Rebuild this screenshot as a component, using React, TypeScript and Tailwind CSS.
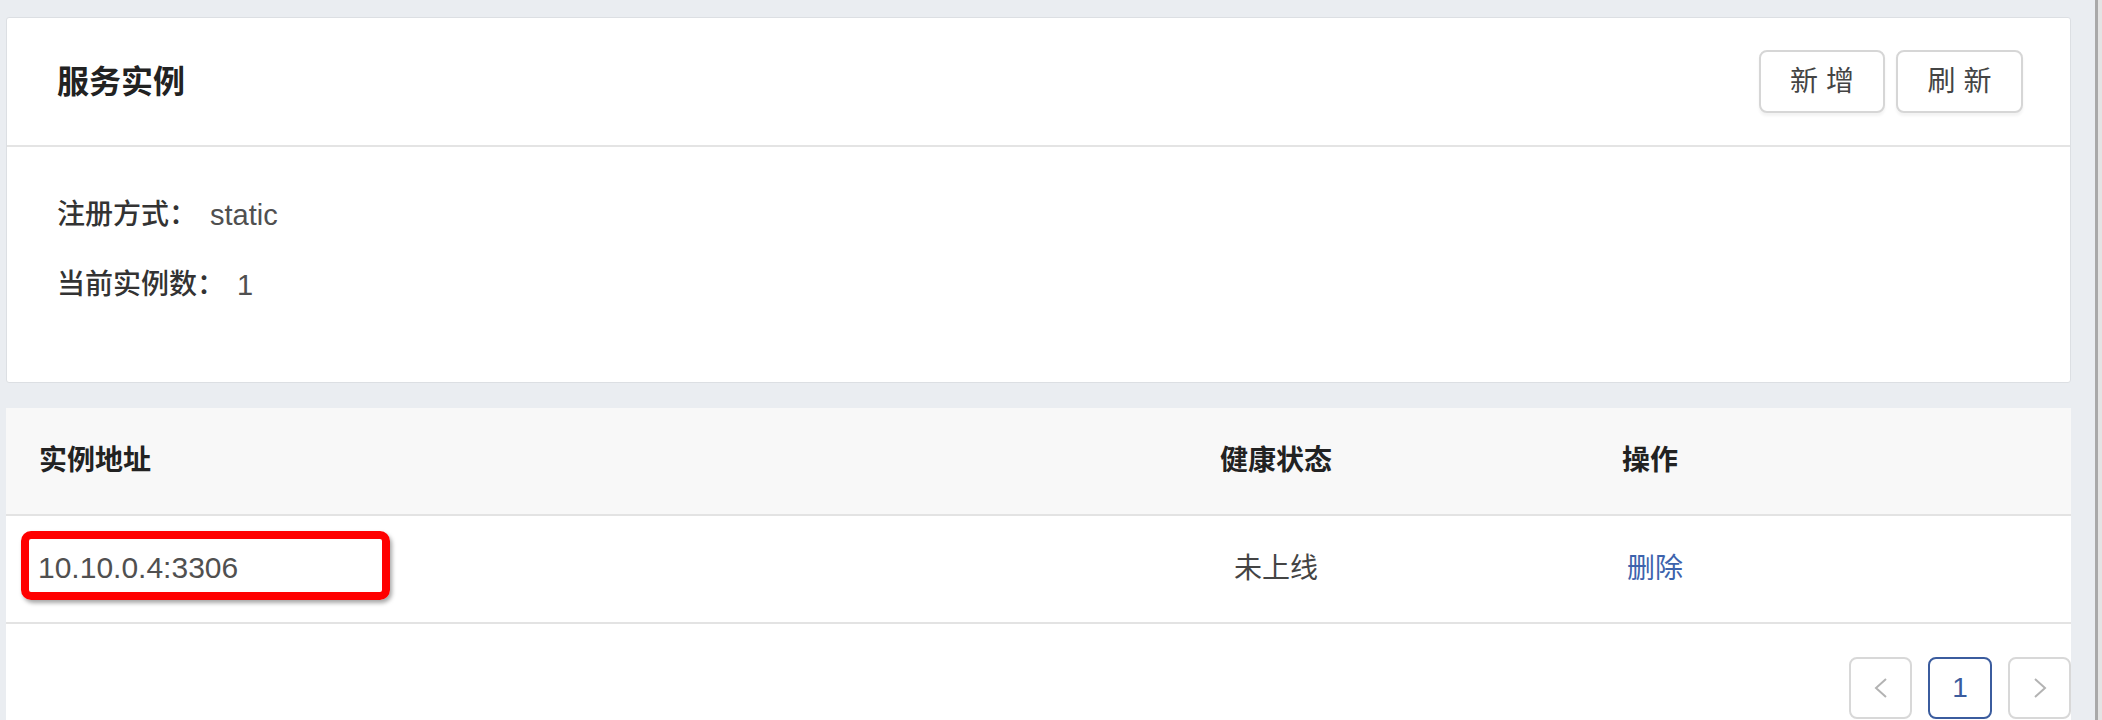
import React from "react";

const FONT = '"Liberation Sans", "Noto Sans CJK SC", sans-serif';

function Chevron({ dir }: { dir: "left" | "right" }) {
  return (
    <svg width="14" height="20" viewBox="0 0 14 20" fill="none">
      {dir === "left" ? (
        <path d="M12 1 L2 10 L12 19" stroke="#b3b3b3" strokeWidth="2" strokeLinejoin="miter" />
      ) : (
        <path d="M2 1 L12 10 L2 19" stroke="#b3b3b3" strokeWidth="2" strokeLinejoin="miter" />
      )}
    </svg>
  );
}

export default function App() {
  return (
    <div
      className="flex w-[2102px] h-[720px] overflow-hidden bg-[#eaedf1]"
      style={{ fontFamily: FONT }}
    >
      <div className="flex-1 flex flex-col pl-[6px] pr-[24px] pt-[17px] gap-[25px] min-w-0">
        {/* Card 1 */}
        <div className="bg-white border border-[#dcdfe3] rounded-[3px] h-[366px] flex flex-col shrink-0">
          <div className="h-[129px] flex items-center justify-between pl-[50px] pr-[47px] border-b-2 border-[#e4e4e4]">
            <div className="text-[32px] leading-[40px] font-semibold text-[#222222]">服务实例</div>
            <div className="flex gap-[11px]">
              <button className="w-[126px] h-[63px] border-2 border-[#d6d6d6] rounded-[8px] bg-white text-[28px] text-[#444444] shadow-[0_3px_3px_rgba(0,0,0,0.05)] flex items-center justify-center">
                新 增
              </button>
              <button className="w-[127px] h-[63px] border-2 border-[#d6d6d6] rounded-[8px] bg-white text-[28px] text-[#444444] shadow-[0_3px_3px_rgba(0,0,0,0.05)] flex items-center justify-center">
                刷 新
              </button>
            </div>
          </div>
          <div className="flex flex-col pl-[50px] pt-[48px] gap-[30px]">
            <div className="flex items-center h-[40px]">
              <span className="text-[28px] leading-[40px] font-medium text-[#333333]">注册方式：</span>
              <span className="ml-[13px] text-[29px] leading-[40px] text-[#505050]">static</span>
            </div>
            <div className="flex items-center h-[40px]">
              <span className="text-[28px] leading-[40px] font-medium text-[#333333]">当前实例数：</span>
              <span className="ml-[12px] text-[29px] leading-[40px] text-[#505050]">1</span>
            </div>
          </div>
        </div>

        {/* Table card */}
        <div className="bg-white flex-1 flex flex-col">
          <div className="grid grid-cols-[1120px_300px_1fr] h-[108px] bg-[#f8f8f8] border-b-2 border-[#e3e3e3]">
            <div className="flex items-center pl-[33px] text-[28px] font-bold text-[#222222]">实例地址</div>
            <div className="flex items-center justify-center text-[28px] font-bold text-[#222222]">健康状态</div>
            <div className="flex items-center pl-[196px] text-[28px] font-bold text-[#222222]">操作</div>
          </div>
          <div className="grid grid-cols-[1120px_300px_1fr] h-[108px] border-b-2 border-[#e3e3e3]">
            <div className="flex items-start pt-[15px] pl-[15px]">
              <div className="w-[369px] h-[69px] border-[8px] border-[#ff0000] rounded-[10px] flex items-center pl-[9px] pt-[5px] shadow-[2px_3px_4px_rgba(0,0,0,0.35)]">
                <span className="text-[30px] leading-[36px] text-[#505050]">10.10.0.4:3306</span>
              </div>
            </div>
            <div className="flex items-center justify-center text-[28px] text-[#444444]">未上线</div>
            <div className="flex items-center pl-[201px] text-[28px] text-[#3d63ad]">删除</div>
          </div>
          <div className="flex justify-end gap-[16px] mt-[33px]">
            <div className="w-[63px] h-[62px] border-2 border-[#d8d8d8] rounded-[8px] flex items-center justify-center">
              <Chevron dir="left" />
            </div>
            <div className="w-[64px] h-[62px] border-2 border-[#3b5c9e] rounded-[8px] flex items-center justify-center text-[28px] text-[#3b5c9e]">
              1
            </div>
            <div className="w-[63px] h-[62px] border-2 border-[#d8d8d8] rounded-[8px] flex items-center justify-center">
              <Chevron dir="right" />
            </div>
          </div>
        </div>
      </div>
      <div className="w-[7px] h-full border-l-[3px] border-[#a9a9a9] bg-[#e4e4e4] shrink-0" />
    </div>
  );
}
